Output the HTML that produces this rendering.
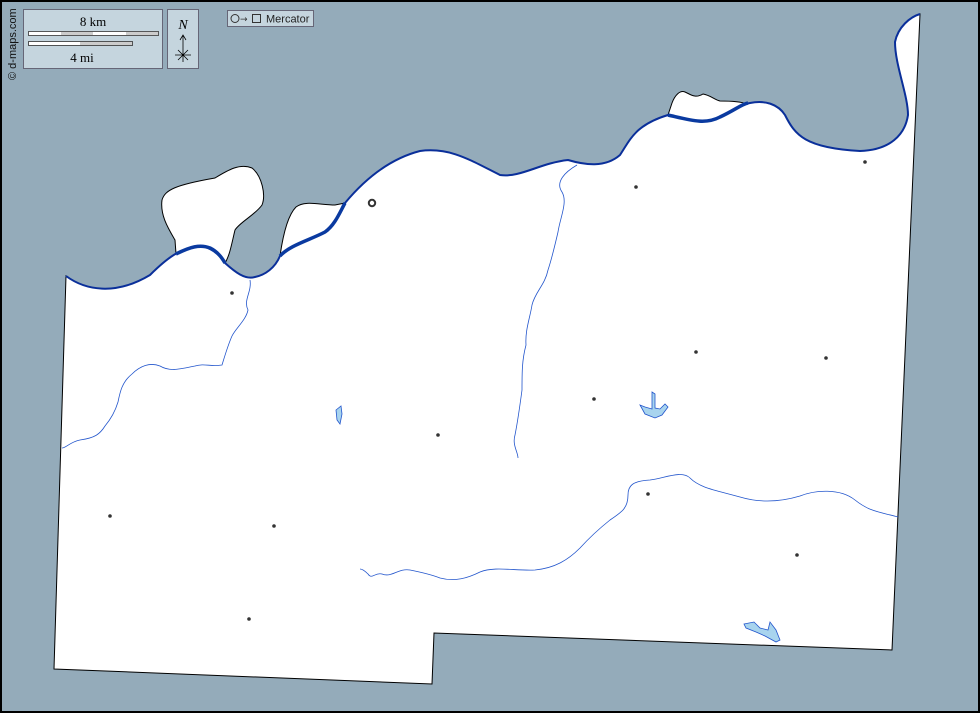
<!DOCTYPE html>
<html><head><style>
html,body{margin:0;padding:0;background:#94abba;}
svg{display:block}
</style></head><body>
<svg width="980" height="713" viewBox="0 0 980 713" xmlns="http://www.w3.org/2000/svg">
<rect x="0" y="0" width="980" height="713" fill="#94abba"/>
<rect x="1" y="1" width="978" height="711" fill="none" stroke="#000" stroke-width="2"/>
<!-- land -->
<path d="M66,276 C85,290 115,296 150,275 C162,264 168,258 176,254 L175,240 C168,228 160,215 162,200 C165,190 175,185 215,178 C228,170 240,163 252,168 C262,176 266,195 262,205 C255,215 240,222 235,230 C232,242 230,255 225,263 C235,272 245,280 255,277 C265,275 275,268 280,256 C283,235 288,215 296,207 C305,200 320,205 335,205 L345,203 C360,185 385,160 420,151 C450,147 470,160 500,175 C520,178 540,163 568,160 C585,165 605,168 620,155 C630,140 635,125 668,115 L672,103 C675,95 680,90 685,92 C690,94 695,99 703,94 C710,95 715,100 720,101 C735,101 742,102 747,104 C760,100 775,102 785,115 C795,135 805,148 860,151 C890,150 905,135 908,115 C908,95 895,65 895,42 C898,27 910,17 920,14 L892,650 L434,633 L432,684 L54,669 Z" fill="#fff" stroke="#000" stroke-width="1"/>
<!-- coast river thick -->
<path d="M66,276 C85,290 115,296 150,275 C170,255 185,245 205,247 C215,250 220,256 225,263 C235,272 245,280 255,277 C265,275 275,268 280,256 C290,245 310,240 325,232 C335,225 340,212 345,203 C360,185 385,160 420,151 C450,147 470,160 500,175 C520,178 540,163 568,160 C585,165 605,168 620,155 C630,140 635,125 668,115 C690,120 705,125 720,117 C735,110 742,104 750,103 C765,100 778,104 785,115 C795,135 805,148 860,151 C890,150 905,135 908,115 C908,95 895,65 895,42 C898,27 910,17 920,14" fill="none" stroke="#0a2f9a" stroke-width="2"/>
<path d="M176,254 C190,247 200,244 210,248 C218,252 222,258 225,263" fill="none" stroke="#0a3aa0" stroke-width="3.5"/>
<path d="M280,256 C290,245 310,240 325,232 C335,225 340,212 345,203" fill="none" stroke="#0a3aa0" stroke-width="3.5"/>
<path d="M668,115 C690,120 705,125 720,117 C735,110 742,104 748,103" fill="none" stroke="#0a3aa0" stroke-width="3.5"/>
<!-- thin rivers -->
<g fill="none" stroke="#2255cc" stroke-width="0.8">
<path d="M250,280 C252,292 243,300 248,310 C246,320 236,328 232,336 C228,345 226,352 222,365 C210,367 205,363 195,366 C180,369 170,372 160,366 C150,362 140,366 132,374 C122,382 120,392 118,402 C115,412 110,420 105,426 C100,434 95,438 80,440 C70,442 66,448 62,448"/>
<path d="M577,165 C565,172 555,182 562,192 C568,202 560,218 558,232 C555,245 552,258 548,270 C545,285 535,292 532,305 C530,318 525,330 526,345 C522,360 522,372 522,390 C520,405 518,420 515,435 C512,445 518,452 518,458"/>
<path d="M898,517 C880,512 870,512 855,500 C840,488 815,490 800,496 C780,502 760,503 740,497 C715,490 700,488 690,478 C682,470 665,478 650,480 C632,481 628,486 628,495 C628,508 622,512 610,520 C600,528 590,537 580,548 C568,560 555,568 535,570 C515,571 495,566 480,572 C468,578 455,582 440,578 C430,574 420,572 410,570 C398,568 392,578 382,574 C375,572 372,580 368,574 C364,570 362,569 360,569"/>
</g>
<!-- lakes -->
<g fill="#a8d4ee" stroke="#2255cc" stroke-width="0.8">
<path d="M336,410 L341,406 L342,414 L340,424 L337,420 Z"/>
<path d="M652,392 L655,394 L655,408 L660,409 L665,404 L668,407 L662,415 L655,418 L645,414 L640,405 L645,407 L652,409 Z"/>
<path d="M744,624 L754,622 L760,628 L768,630 L770,622 L776,630 L780,640 L776,642 L765,636 L756,632 L746,628 Z"/>
</g>
<!-- dots -->
<g fill="#333">
<circle cx="232" cy="293" r="1.8"/><circle cx="636" cy="187" r="1.8"/><circle cx="865" cy="162" r="1.8"/>
<circle cx="696" cy="352" r="1.8"/><circle cx="826" cy="358" r="1.8"/><circle cx="594" cy="399" r="1.8"/>
<circle cx="438" cy="435" r="1.8"/><circle cx="648" cy="494" r="1.8"/><circle cx="110" cy="516" r="1.8"/>
<circle cx="274" cy="526" r="1.8"/><circle cx="797" cy="555" r="1.8"/><circle cx="249" cy="619" r="1.8"/>
</g>
<circle cx="372" cy="203" r="3.2" fill="none" stroke="#333" stroke-width="2"/>
<!-- scale box -->
<rect x="23.5" y="9.5" width="139" height="59" fill="#c5d5de" stroke="#667"/>
<text x="93" y="26" font-family="Liberation Serif, serif" font-size="13" text-anchor="middle" fill="#000">8 km</text>
<rect x="28.5" y="31.5" width="130" height="4" fill="#fff" stroke="#333" stroke-width="0.8"/>
<rect x="61" y="32" width="32" height="3" fill="#ccc"/><rect x="126" y="32" width="32" height="3" fill="#ccc"/>
<rect x="28.5" y="41.5" width="104" height="4" fill="#ccc" stroke="#333" stroke-width="0.8"/>
<rect x="29" y="42" width="51" height="3" fill="#fff"/>
<text x="82" y="62" font-family="Liberation Serif, serif" font-size="13" text-anchor="middle" fill="#000">4 mi</text>
<!-- north -->
<rect x="167.5" y="9.5" width="31" height="59" fill="#c5d5de" stroke="#667"/>
<text x="183" y="29" font-family="Liberation Serif, serif" font-style="italic" font-size="14" text-anchor="middle">N</text>
<g stroke="#000" stroke-width="0.8" fill="none">
<path d="M183,36 L183,62 M180,40 L183,35 L186,40 M175,55 L191,55 M178,50 L188,60 M188,50 L178,60"/>
</g>
<!-- mercator -->
<rect x="227.5" y="10.5" width="86" height="16" fill="#c5d5de" stroke="#667"/>
<circle cx="235" cy="18.5" r="4" fill="none" stroke="#333"/>
<text x="240" y="22" font-family="DejaVu Sans, sans-serif" font-size="9" fill="#333">→</text>
<rect x="252.5" y="14.5" width="8" height="8" fill="none" stroke="#333"/>
<text x="266" y="22.5" font-family="Liberation Sans, sans-serif" font-size="11" fill="#222">Mercator</text>
<text transform="translate(16,80) rotate(-90)" font-family="Liberation Sans, sans-serif" font-size="11" fill="#111">© d-maps.com</text>
</svg>
</body></html>
